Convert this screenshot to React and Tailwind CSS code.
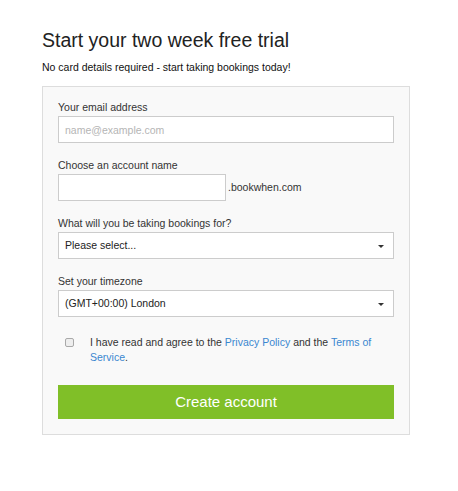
import React from 'react';

const Field = ({ label, children }) => (
    <div className="mb-[15px]">
        <label className="block h-[15px] mb-[1px] text-[10.5px] leading-[15px] text-[#333]">{label}</label>
        {children}
    </div>
);

const Caret = () => (
    <span className="absolute right-[9px] top-[12px] w-0 h-0 border-x-[3px] border-x-transparent border-t-[3px] border-t-[#333]" />
);

const App = () => {
    return (
        <div className="min-h-[491px] bg-white text-[#333]" style={{ fontFamily: '"Liberation Sans", Arial, sans-serif' }}>
            <div className="pl-[42px] pt-[28px]">
                <h1 className="text-[19.5px] leading-[24px] text-[#222] font-normal">Start your two week free trial</h1>
                <p className="mt-[8px] text-[10.5px] leading-[15px] text-[#111]">No card details required - start taking bookings today!</p>

                {/* Signup form */}
                <form className="mt-[11px] w-[368px] border border-[#ddd] bg-[#f9f9f9] px-[15px] pt-[13px] pb-[15px]">
                    <Field label="Your email address">
                        <input
                            type="email"
                            placeholder="name@example.com"
                            className="block w-full h-[27px] border border-[#ccc] bg-white px-[6px] text-[10.5px] text-[#333] placeholder:text-[#b5b5b5] outline-none"
                        />
                    </Field>

                    <Field label="Choose an account name">
                        <div className="flex items-center">
                            <input type="text" className="block w-[168px] h-[27px] border border-[#ccc] bg-white px-[6px] text-[10.5px] outline-none" />
                            <span className="ml-[2px] text-[10.5px] text-[#333]">.bookwhen.com</span>
                        </div>
                    </Field>

                    <Field label="What will you be taking bookings for?">
                        <div className="relative h-[27px] border border-[#ccc] bg-white px-[6px] text-[10.5px] leading-[25px] text-[#222]">
                            Please select...
                            <Caret />
                        </div>
                    </Field>

                    <Field label="Set your timezone">
                        <div className="relative h-[27px] border border-[#ccc] bg-white px-[6px] text-[10.5px] leading-[25px] text-[#222]">
                            (GMT+00:00) London
                            <Caret />
                        </div>
                    </Field>

                    <div className="flex mt-[18px] pl-[7px]">
                        <span className="mt-[3px] w-[9px] h-[9px] shrink-0 rounded-[2px] border border-[#a9a9a9] bg-[#eee]" />
                        <p className="ml-[16px] text-[10.5px] leading-[15px] text-[#333]">
                            I have read and agree to the <a className="text-[#3a87d0]">Privacy Policy</a> and the <a className="text-[#3a87d0]">Terms of Service</a>.
                        </p>
                    </div>

                    <button type="button" className="mt-[20px] block w-full h-[34px] bg-[#80bf28] text-white text-[15px]">
                        Create account
                    </button>
                </form>
            </div>
        </div>
    );
};

export default App;
